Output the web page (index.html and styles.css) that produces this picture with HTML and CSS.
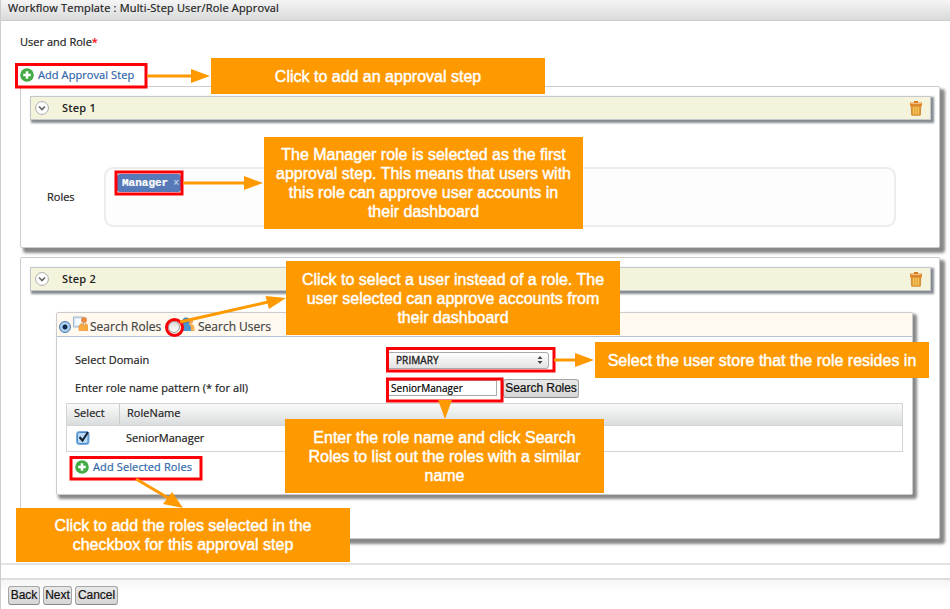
FILE: index.html
```html
<!DOCTYPE html>
<html lang="en">
<head>
<meta charset="utf-8">
<title>Workflow Template</title>
<link rel="stylesheet" href="styles.css">
</head>
<body>
<svg class="defs" width="0" height="0" aria-hidden="true">
  <symbol id="plus" viewBox="0 0 14 14"><circle cx="7" cy="7" r="6.8" fill="#43ab45"/><path d="M7 3.2v7.6M3.2 7h7.6" stroke="#fff" stroke-width="2.5"/></symbol>
  <symbol id="chevron" viewBox="0 0 14 14"><circle cx="7" cy="7" r="6.4" fill="#fff" stroke="#aaa"/><path d="M4 5.5l3 3 3-3" fill="none" stroke="#666" stroke-width="1.7"/></symbol>
  <symbol id="trash" viewBox="0 0 12 15"><path d="M4 0h4v2H4z" fill="#d5781c"/><path d="M0 1.5h12V5H0z" fill="#e08a32"/><path d="M1 2.5h10" stroke="#f4bd80"/><path d="M1.2 5h9.6l-.5 9.2H1.7z" fill="#e59b35" stroke="#cc7b20" stroke-width=".8"/><path d="M3.7 5.5v8M6 5.5v8M8.3 5.5v8" stroke="#f4cf62" stroke-width="1.1"/></symbol>
</svg>
<main class="page">
  <header class="title">Workflow Template : Multi-Step User/Role Approval</header>
  <div class="content">
    <div class="label">User and Role<span class="req">*</span></div>
    <a class="link add-step"><svg width="14" height="14"><use href="#plus"/></svg><span>Add Approval Step</span></a>

    <section class="panel first">
      <div class="stepbar"><svg width="14" height="14"><use href="#chevron"/></svg><b>Step 1</b><svg class="trash" width="12" height="15"><use href="#trash"/></svg></div>
      <div class="roles">
        <span class="roles-label">Roles</span>
        <div class="rolebox"><span class="chip">Manager<i>×</i></span></div>
      </div>
    </section>

    <section class="panel second">
      <div class="stepbar"><svg width="14" height="14"><use href="#chevron"/></svg><b>Step 2</b><svg class="trash" width="12" height="15"><use href="#trash"/></svg></div>
      <div class="search">
        <div class="tabs">
          <span class="radio on"></span>
          <svg class="roleicon" width="15" height="15" viewBox="0 0 15 15"><path d="M.5 1h10v10H.5z" fill="#dbe9f7" stroke="#9fb2c8"/><path d="M2.5 3h6v6h-6z" fill="#f6fbff"/><circle cx="11" cy="4" r="3" fill="#e98c4a"/><path d="M6 14.5V10q1-2.5 3-2.5l2 2 1.500-2q2 .5 2.500 3v4z" fill="#f9ab40" stroke="#e68722" stroke-width=".6"/></svg>
          <span class="tab-a">Search Roles</span>
          <span class="radio"></span>
          <svg class="usericon" width="14" height="15" viewBox="0 0 14 15"><circle cx="9" cy="4" r="3" fill="#eda35f"/><path d="M7 14V7h4q2.500 1 2.500 4v3z" fill="#f7b04f"/><circle cx="5" cy="4" r="3.500" fill="#3f83bd"/><path d="M0 14V9q2-3 5-3t5 4v4z" fill="#4d94ce"/></svg>
          <span class="tab-b">Search Users</span>
        </div>
        <div class="row domain"><span class="t-dom">Select Domain</span><div class="select"><span>PRIMARY</span><svg width="6" height="8" viewBox="0 0 6 8"><path d="M3 0l2.500 3H.5zM3 8l2.500-3H.5z" fill="#444"/></svg></div></div>
        <div class="row pattern"><span class="t-pat">Enter role name pattern (* for all)</span><div class="input">SeniorManager</div><div class="btn find">Search Roles</div></div>
        <div class="table">
          <div class="thead"><span class="c1">Select</span><span class="c2">RoleName</span></div>
          <div class="tbody"><svg width="16" height="16" viewBox="0 0 16 16"><rect x="1" y="1" width="13.500" height="14" rx="3.500" fill="#79ace0"/><rect x="2.500" y="2.500" width="10.500" height="11" rx="2" fill="#b9daf8" stroke="#4e88c4"/><path d="M4.500 7l3 3.500L13 2" fill="none" stroke="#14202e" stroke-width="2"/></svg><span>SeniorManager</span></div>
        </div>
        <a class="link add-roles"><svg width="14" height="14"><use href="#plus"/></svg><span>Add Selected Roles</span></a>
      </div>
    </section>
  </div>
  <footer class="footer"><div class="btn back">Back</div><div class="btn next">Next</div><div class="btn cancel">Cancel</div></footer>

  <svg class="marks" width="950" height="609" viewBox="0 0 950 609">
    <g fill="none" stroke="#fb0007" stroke-width="3">
      <rect x="16.500" y="64.500" width="129.500" height="22.500"/>
      <rect x="116" y="172" width="66" height="22"/>
      <rect x="387.500" y="348.500" width="166.500" height="22.500"/>
      <rect x="387.500" y="379" width="114.500" height="22"/>
      <rect x="71" y="457.500" width="130" height="21.500"/>
      <circle cx="174.500" cy="327.500" r="8"/>
    </g>
    <g stroke="#f90" stroke-width="3">
      <path d="M147 76H195M183 183H248M180 322L268 302M554 360H578M136 479L170 499"/>
    </g>
    <g fill="#f90">
      <path d="M191 69v14l19-7zM244 176v14l19-7zM265.500 296l3.500 13 17-11zM575 353v14l19-7zM163 504l9-12 11 16zM438 400h14l-7 19z"/>
    </g>
  </svg>
  <div class="note n1"><span>Click to add an approval step</span></div>
  <div class="note n2"><span>The Manager role is selected as the first</span><span>approval step. This means that users with</span><span>this role can approve user accounts in</span><span>their dashboard</span></div>
  <div class="note n3"><span>Click to select a user instead of a role. The</span><span>user selected can approve accounts from</span><span>their dashboard</span></div>
  <div class="note n4"><span>Select the user store that the role resides in</span></div>
  <div class="note n5"><span>Enter the role name and click Search</span><span>Roles to list out the roles with a similar</span><span>name</span></div>
  <div class="note n6"><span>Click to add the roles selected in the</span><span>checkbox for this approval step</span></div>
</main>
</body>
</html>
```
FILE: styles.css
```css
* { box-sizing: border-box; }
body { margin: 0; background: #fff; color: #222; font: 11px/16px "Open Sans", "Noto Sans", sans-serif; -webkit-text-stroke: .2px; }
.defs { position: absolute; }
svg { display: block; flex: none; }
span, b { white-space: nowrap; }
.page { position: relative; width: 950px; height: 609px; overflow: hidden; border-left: 1px solid #ccc; }
.title { height: 21px; padding: 0 7px; letter-spacing: .17px; background: linear-gradient(#f5f5f5, #d9dada); border-bottom: 1px solid #ccc; }
.content { height: 544px; padding: 13px 0 0 19px; border-bottom: 2px solid #e3e3e3; }
.label { height: 16px; letter-spacing: .02px; }
.req { color: red; }
.link { display: flex; align-items: center; gap: 4px; height: 16px; color: #2f66a8; }
.add-step { margin-top: 17px; letter-spacing: .08px; }
.panel { width: 920px; border: 1px solid #ccc; border-radius: 2px; background: #fff; box-shadow: 4px 4px 3px 1px #888; padding: 9px 8px 0 9px; }
.first { height: 162px; margin-top: 3px; }
.second { height: 282px; margin-top: 9px; }
.stepbar { display: flex; align-items: center; height: 24px; width: 901px; padding: 0 8px 0 4px; background: #f4f4dc; border: 1px solid #c4c7cc; box-shadow: 2px 2px 2px 1px #868b92; }
.stepbar b { margin-left: 13px; font-weight: 600; letter-spacing: .2px; -webkit-text-stroke: 0; }
.trash { margin-left: auto; }
.roles { display: flex; align-items: center; margin: 47px 0 0 17px; }
.roles-label { width: 57px; }
.rolebox { width: 792px; height: 60px; border: 2px solid #ececec; border-radius: 9px; padding: 5px 0 0 11px; background: #fdfdfd; }
.chip { display: flex; align-items: center; justify-content: space-between; width: 64px; height: 18px; padding: 0 2px 0 5px; border-radius: 3px; background: #5879b7; color: #fff; font: bold 11px/18px "Liberation Mono", monospace; }
.chip i { font: 10px/18px "Liberation Sans", sans-serif; color: #cbd6ec; }
.search { width: 857px; height: 183px; margin: 21px 0 0 26px; border: 1px solid #ccc; border-radius: 2px; background: #fff; box-shadow: 3px 3px 3px 1px #888; }
.tabs { display: flex; align-items: center; height: 24px; padding: 5px 0 0 2px; font-size: 12px; color: #444; background: #fff9ef; border-bottom: 1px solid #b6c0d6; }
.radio { flex: none; width: 12px; height: 12px; border: 1px solid #999; border-radius: 50%; background: linear-gradient(#ddd, #fff); }
.radio.on { border-color: #4b78ad; background: radial-gradient(circle, #102a50 0 2px, #b5d7f6 3px, #8ebae8); }
.roleicon { margin: -7px 0 0 2px; }
.tab-a { width: 78px; margin-left: 2px; }
.usericon { margin: -6px 0 0 1px; }
.tab-b { margin-left: 3px; }
.row { display: flex; align-items: center; padding-left: 18px; letter-spacing: .06px; }
.row > span { width: 312px; }
.domain { height: 24px; margin-top: 11px; }
.pattern { height: 24px; margin-top: 4px; }
.select { display: flex; align-items: center; justify-content: space-between; width: 162px; height: 17px; padding: 0 5px 0 8px; border: 1px solid #aaa; border-radius: 3px; background: linear-gradient(#fff, #e2e2e2); font-size: 10px; letter-spacing: .1px; color: #222; -webkit-text-stroke: .35px; }
.input { width: 110px; height: 16px; padding-left: 3px; border: 1px solid #aaa; background: #fff; font-size: 10px; line-height: 14px; letter-spacing: .05px; color: #000; }
.btn { height: 19px; border: 1px solid #a5a5a5; border-bottom-color: #888; border-radius: 3px; background: linear-gradient(#e8e8e8, #d6d6d6); font: 12px/17px "Liberation Sans", sans-serif; letter-spacing: -.05px; text-align: center; color: #111; -webkit-text-stroke: .2px #111; white-space: nowrap; }
.find { width: 76px; margin-left: 6px; }
.table { width: 837px; height: 49px; margin: 3px 0 0 9px; border: 1px solid #d4d4d4; }
.thead { display: flex; height: 22px; background: linear-gradient(#fafafa, #dadddd); border-bottom: 1px solid #d4d4d4; line-height: 18px; letter-spacing: .05px; }
.c1 { width: 53px; padding-left: 7px; border-right: 1px solid #ccc; }
.c2 { padding-left: 7px; }
.tbody { display: flex; align-items: center; height: 24px; padding-left: 8px; }
.tbody span { margin-left: 35px; letter-spacing: 0; }
.add-roles { margin: 7px 0 0 18px; letter-spacing: .12px; }
.footer { display: flex; gap: 3px; height: 31px; margin-top: 13px; padding: 6px 0 0 7px; border-top: 2px solid #ddd; background: linear-gradient(#f5f5f5, #fff 12px); }
.back { width: 32px; }
.next { width: 29px; }
.cancel { width: 43px; }
.marks { position: absolute; left: -1px; top: 0; }
.note { position: absolute; display: flex; flex-direction: column; align-items: center; justify-content: center; background: #f90; color: #fff; font: 16px/19px "Liberation Sans", Arial, sans-serif; -webkit-text-stroke: .45px #fff; }
.n1 { left: 210px; top: 58px; width: 334px; height: 36px; }
.n2 { left: 263px; top: 137px; width: 319px; height: 92px; }
.n3 { left: 285px; top: 261px; width: 334px; height: 74px; }
.n4 { left: 594px; top: 342px; width: 334px; height: 36px; }
.n5 { left: 284px; top: 419px; width: 319px; height: 74px; }
.n6 { left: 15px; top: 508px; width: 334px; height: 54px; }
```
